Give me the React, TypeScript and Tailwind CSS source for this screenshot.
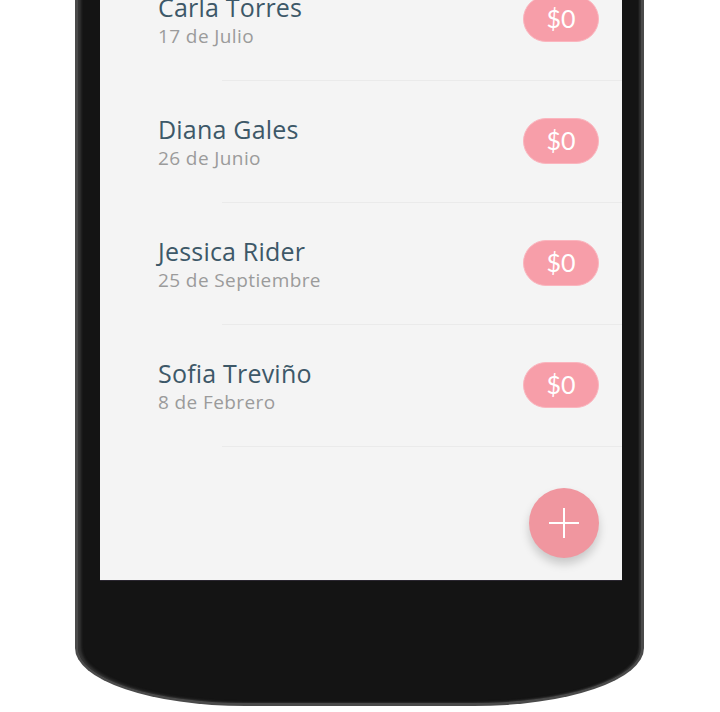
import React from "react";

const rows = [
  { name: "Carla Torres", date: "17 de Julio" },
  { name: "Diana Gales", date: "26 de Junio" },
  { name: "Jessica Rider", date: "25 de Septiembre" },
  { name: "Sofia Treviño", date: "8 de Febrero" },
];

export default function App() {
  return (
    <div className="w-[720px] h-[712px] bg-white overflow-hidden relative" style={{ fontFamily: "Lato, 'Open Sans', sans-serif" }}>
      {/* phone body */}
      <div className="absolute left-[75px] top-[-40px] w-[569px] h-[746px] bg-[#141414] border-x-[3px] border-b-[3px] border-[#4a4a4a] rounded-bl-[170px_58px] rounded-br-[170px_58px] shadow-[inset_3px_0_3px_rgba(120,120,120,0.35),inset_-2px_0_2px_rgba(120,120,120,0.3)]" />
      {/* screen */}
      <div className="absolute left-[100px] top-0 w-[522px] h-[581px] bg-[#f4f4f4] border-b border-[#2a2630] overflow-hidden">
        <div className="flex flex-col -mt-[41px]">
          {rows.map((r) => (
            <div key={r.name} className="relative h-[122px] flex items-center pl-[58px] pr-[23px]">
              <div className="flex flex-col flex-1 font-['Open_Sans',sans-serif]">
                <div className="text-[25px] leading-[30px] text-[#3d5868] tracking-[0.2px]">{r.name}</div>
                <div className="text-[19px] leading-[26px] text-[#9b9b9b] mt-[1px] tracking-[0.4px]">{r.date}</div>
              </div>
              <div className="w-[76px] h-[46px] rounded-full bg-[#f79ea9] border border-[#fbb5be] flex items-center justify-center text-white text-[25px] -mt-[2px]">
                $0
              </div>
              <div className="absolute left-[122px] right-0 bottom-0 h-px bg-[#eaeaea]" />
            </div>
          ))}
        </div>
        <div className="flex justify-end pr-[23px] mt-[41px]">
          <div className="w-[70px] h-[70px] rounded-full bg-[#f0969f] shadow-[0_6px_10px_rgba(0,0,0,0.18)] flex items-center justify-center">
            <svg width="30" height="30" viewBox="0 0 30 30">
              <path d="M15 0V30M0 15H30" stroke="white" strokeWidth="2" />
            </svg>
          </div>
        </div>
      </div>
    </div>
  );
}
